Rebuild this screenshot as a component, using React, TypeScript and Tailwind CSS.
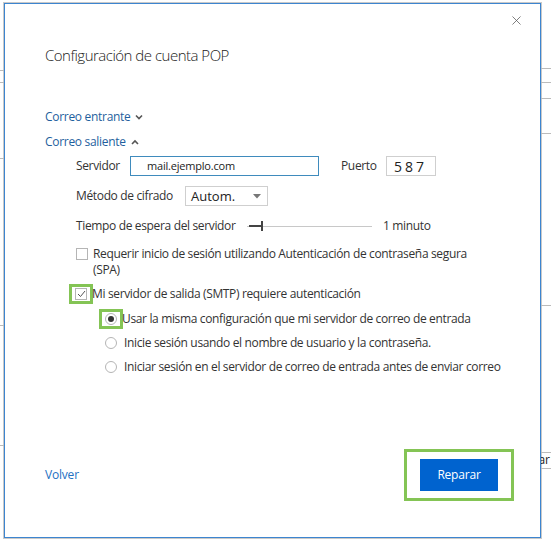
import { X } from 'lucide-react';

const font = { fontFamily: '"Segoe UI", "Open Sans", "Noto Sans", sans-serif' };

function Chevron({ up }: { up?: boolean }) {
  return (
    <svg width="8" height="6" viewBox="0 0 8 6" className="ml-[5px]">
      <path d={up ? 'M1 5 L4 2 L7 5' : 'M1 1.5 L4 4.5 L7 1.5'} fill="none" stroke="#555" strokeWidth="1.6" />
    </svg>
  );
}

function Radio({ checked }: { checked?: boolean }) {
  return (
    <span className="flex h-[12px] w-[12px] shrink-0 items-center justify-center rounded-full border border-[#b5b5b5] bg-white">
      {checked && <span className="h-[6px] w-[6px] rounded-full bg-[#333]" />}
    </span>
  );
}

export default function App() {
  return (
    <div className="relative h-[542px] w-[551px] overflow-hidden whitespace-nowrap bg-white text-[#333]" style={font}>
      {/* bits of the window behind the dialog */}
      <div className="absolute left-0 top-[70px] h-px w-[4px] bg-[#bbb]" />
      <div className="absolute left-0 top-[82px] h-px w-[4px] bg-[#bbb]" />
      <div className="absolute left-0 top-[158px] h-px w-[4px] bg-[#bbb]" />
      <div className="absolute left-0 top-[325px] h-px w-[4px] bg-[#bbb]" />
      <div className="absolute left-0 top-[445px] h-px w-[4px] bg-[#bbb]" />
      <div className="absolute right-0 top-[68px] h-px w-[10px] bg-[#bbb]" />
      <div className="absolute right-0 top-[82px] h-px w-[10px] bg-[#bbb]" />
      <div className="absolute right-0 top-[98px] h-px w-[10px] bg-[#bbb]" />
      <div className="absolute right-0 top-[133px] h-px w-[10px] bg-[#bbb]" />
      <div className="absolute right-0 top-[305px] h-px w-[10px] bg-[#bbb]" />
      <div className="absolute right-0 top-[452px] h-px w-[10px] bg-[#bbb]" />
      <div className="absolute right-0 top-[468px] h-px w-[10px] bg-[#bbb]" />
      <span className="absolute right-[1px] top-[451px] text-[12px] text-[#222]">ar</span>

      <div className="ml-[3px] mt-[2px] h-[537px] w-[539px] bg-[#c9c9c9] p-px">
        <div className="relative flex h-full w-full flex-col border border-[#3c85d0] bg-white pl-[40px]">
          <button className="absolute right-[16px] top-[9px] text-[#555]">
            <X size={15} strokeWidth={1.2} />
          </button>

          <h1 className="mt-[39px] h-[24px] text-[15px] font-light leading-[24px] tracking-[-0.5px] text-[#222]">
            Configuración de cuenta POP
          </h1>

          <div className="mt-[38px] flex h-[24px] items-center text-[12px] tracking-[-0.3px] text-[#1f5f9e]">
            Correo entrante <Chevron />
          </div>
          <div className="mt-px flex h-[24px] items-center text-[12px] tracking-[-0.3px] text-[#1f5f9e]">
            Correo saliente <Chevron up />
          </div>

          <div className="ml-[31px] flex flex-col text-[12px] tracking-[-0.35px]">
            <div className="mt-[2px] flex h-[20px] items-center">
              <span className="w-[54px]">Servidor</span>
              <div className="flex h-[20px] w-[189px] items-center border border-[#3f8bbd] pl-[16px] text-[11px] tracking-[-0.2px] text-[#222]">
                mail.ejemplo.com
              </div>
              <span className="ml-[22px] w-[45px]">Puerto</span>
              <div className="flex h-[20px] w-[50px] items-center border border-[#cfcfcf] pl-[7px] text-[14px] tracking-[3px] text-[#222]">
                587
              </div>
            </div>

            <div className="mt-[10px] flex h-[20px] items-center">
              <span className="w-[109px]">Método de cifrado</span>
              <div className="flex h-[20px] w-[83px] items-center justify-between border border-[#cfcfcf] pl-[5px] pr-[6px] text-[13px] tracking-normal text-[#222]">
                <span className="mt-[2px]">Autom.</span>
                <svg width="8" height="5" viewBox="0 0 8 5">
                  <path d="M0 0 H8 L4 4.5 Z" fill="#777" />
                </svg>
              </div>
            </div>

            <div className="mt-[10px] flex h-[20px] items-center">
              <span className="w-[171px]">Tiempo de espera del servidor</span>
              <div className="relative h-[10px] w-[125px]">
                <div className="absolute left-0 right-0 top-[5px] h-px bg-[#c8c8c8]" />
                <div className="absolute left-[2px] top-[4px] h-[2px] w-[14px] bg-[#444]" />
                <div className="absolute left-[14px] top-0 h-[10px] w-[2px] bg-[#444]" />
              </div>
              <span className="ml-[11px]">1 minuto</span>
            </div>

            <div className="mt-[10px] flex items-start">
              <span className="mt-[2px] h-[12px] w-[12px] shrink-0 border border-[#b5b5b5]" />
              <span className="ml-[5px] leading-[16px]">
                Requerir inicio de sesión utilizando Autenticación de contraseña segura
                <br />
                (SPA)
              </span>
            </div>

            <div className="ml-[-7px] mt-[6px] flex items-center">
              <span className="flex h-[20px] w-[24px] items-center justify-center border-[3px] border-[#84c455]">
                <span className="flex h-[12px] w-[12px] items-center justify-center border border-[#b5b5b5]">
                  <svg width="9" height="8" viewBox="0 0 9 8">
                    <path d="M1 4 L3.5 6.5 L8 1" fill="none" stroke="#555" strokeWidth="1" />
                  </svg>
                </span>
              </span>
              <span className="ml-[-1px]">Mi servidor de salida (SMTP) requiere autenticación</span>
            </div>

            <div className="ml-[23px] mt-[5px] flex flex-col">
              <div className="flex items-center">
                <span className="flex h-[20px] w-[24px] items-center justify-center border-[3px] border-[#84c455]">
                  <Radio checked />
                </span>
                <span className="ml-[-1px]">Usar la misma configuración que mi servidor de correo de entrada</span>
              </div>
              <div className="mt-[4px] flex h-[20px] items-center pl-[6px]">
                <Radio />
                <span className="ml-[7px]">Inicie sesión usando el nombre de usuario y la contraseña.</span>
              </div>
              <div className="mt-[4px] flex h-[20px] items-center pl-[6px]">
                <Radio />
                <span className="ml-[7px]">Iniciar sesión en el servidor de correo de entrada antes de enviar correo</span>
              </div>
            </div>
          </div>

          <div className="mt-auto mb-[36px] flex items-center justify-between pr-[26px]">
            <a className="text-[12px] tracking-[-0.2px] text-[#2470c2]">Volver</a>
            <div className="border-[3px] border-[#84c455] px-[13px] py-[7px]">
              <button className="h-[32px] w-[78px] bg-[#0063cf] text-[12px] tracking-[-0.2px] text-white">Reparar</button>
            </div>
          </div>
        </div>
      </div>
    </div>
  );
}
